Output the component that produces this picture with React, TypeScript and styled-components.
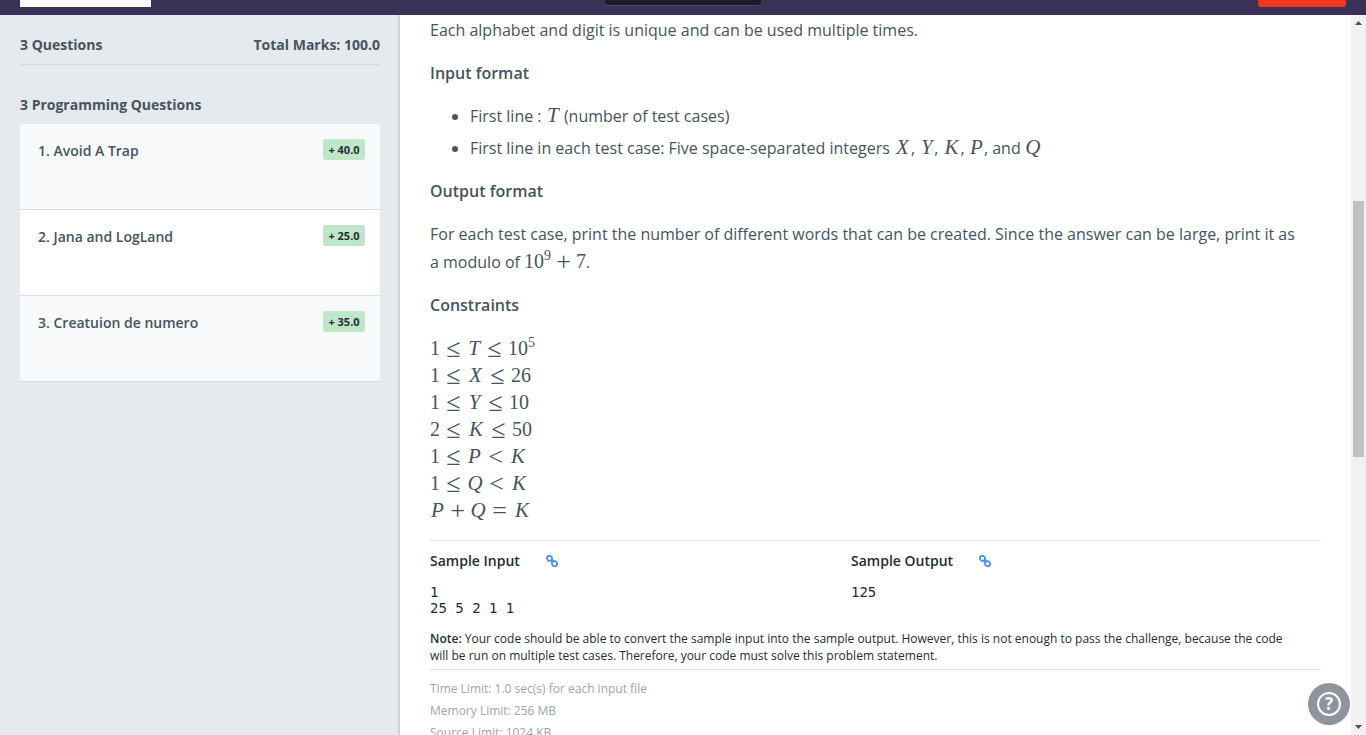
import React from "react";
import styled, { createGlobalStyle } from "styled-components";

const GlobalStyle = createGlobalStyle`
  *, *::before, *::after { box-sizing: border-box; }
  body {
    margin: 0;
    font-family: "Open Sans", "Noto Sans", sans-serif;
    color: #46535e;
    background: #ffffff;
  }
  h2, h3, p, ul, ol, pre { margin: 0; padding: 0; }
`;

const Shell = styled.div`
  display: flex;
  flex-direction: column;
  height: 100vh;
  overflow: hidden;
`;

const TopBar = styled.header`
  display: grid;
  grid-template-columns: 1fr auto 1fr;
  align-items: start;
  flex: none;
  height: 15px;
  padding: 0 20px;
  background: #393256;
`;

const LogoPlate = styled.div`
  width: 131px;
  height: 7px;
  background: #ffffff;
`;

const TimerPlate = styled.div`
  width: 156px;
  height: 5px;
  border-radius: 0 0 3px 3px;
  background: #1d1928;
  box-shadow: 0 1px 0 #4d466a;
`;

const EndButton = styled.button`
  justify-self: end;
  width: 88px;
  height: 7px;
  padding: 0;
  border: 0;
  border-radius: 0 0 3px 3px;
  background: #f0391c;
`;

const Body = styled.div`
  display: flex;
  flex: 1;
  min-height: 0;
`;

const Sidebar = styled.aside`
  flex: none;
  width: 400px;
  padding: 16px 19px 0 20px;
  border-right: 1px solid #c9ced3;
  background: #e5eaee;
  box-shadow: inset -2px 0 2px -1px #d3d8dc;
`;

const Summary = styled.div`
  display: flex;
  justify-content: space-between;
  padding-bottom: 5px;
  border-bottom: 1px solid #d3d9dd;
  font-size: 14px;
  font-weight: 700;
  line-height: 28px;
`;

const SectionTitle = styled.h2`
  && { margin-top: 26px; }
  padding-bottom: 5px;
  font-size: 14px;
  font-weight: 700;
  line-height: 28px;
`;

const QuestionList = styled.ul`
  list-style: none;
`;

const QuestionLink = styled.a<{ $active?: boolean }>`
  display: flex;
  justify-content: space-between;
  align-items: flex-start;
  height: 86px;
  padding: 15px 15px 0 18px;
  border-bottom: 1px solid #d9dde1;
  background: ${(p) => (p.$active ? "#ffffff" : "#f8f9fb")};
  color: inherit;
  font-size: 14px;
  font-weight: 600;
  line-height: 24px;
  text-decoration: none;
`;

const Marks = styled.span`
  min-width: 42px;
  padding: 0 5px;
  border-radius: 3px;
  background: #bfe6c8;
  color: #252c33;
  font-size: 11px;
  font-weight: 700;
  line-height: 21px;
  text-align: center;
`;

const Content = styled.main`
  flex: 1;
  min-width: 0;
  overflow: hidden;
  padding: 2px 30px 0;
`;

const Text = styled.p`
  && { margin-bottom: 16px; padding-right: 24px; }
  font-size: 16px;
  line-height: 27px;
`;

const Heading = styled.h3`
  && { margin-bottom: 16px; }
  font-size: 16px;
  font-weight: 600;
  line-height: 27px;
`;

const Bullets = styled.ul`
  && { margin-bottom: 16px; padding-left: 40px; }
  font-size: 16px;
  line-height: 27px;
  li + li { margin-top: 5px; }
`;

const Formula = styled.span<{ $tall?: boolean }>`
  font-family: "Liberation Serif", serif;
  font-size: 20px;
  line-height: ${(p) => (p.$tall ? 26 : 20)}px;
  white-space: nowrap;
  sup {
    font-size: 14px;
    line-height: 0;
    vertical-align: 8px;
  }
`;

const letterWidths: Record<string, number> = { T: 14, X: 17, Y: 15, K: 18, P: 15, Q: 16 };

const Letter = styled.i<{ $width: number }>`
  display: inline-block;
  width: ${(p) => p.$width}px;
  font-size: 21px;
  line-height: 20px;
  text-align: center;
`;

const Operator = styled.span<{ $binary?: boolean }>`
  display: inline-block;
  width: 15px;
  margin: 0 ${(p) => (p.$binary ? 5 : 6)}px;
  font-size: 26px;
  line-height: 20px;
  text-align: center;
  vertical-align: -2px;
`;

const Constraints = styled.ul`
  list-style: none;
  li { height: 27px; line-height: 29px; }
`;

const Samples = styled.div`
  display: grid;
  grid-template-columns: 421px 1fr;
  margin-top: 16px;
  border-top: 1px solid #dddddd;
  padding-top: 8px;
`;

const SampleTitle = styled.h3`
  display: flex;
  align-items: center;
  gap: 26px;
  && { margin-bottom: 11px; }
  color: #252c33;
  font-size: 14px;
  font-weight: 600;
  line-height: 24px;
`;

const SampleText = styled.pre`
  color: #252c33;
  font-family: "DejaVu Sans Mono", monospace;
  font-size: 14px;
  line-height: 16px;
`;

const LinkAnchor = styled.a`
  display: flex;
  svg { display: block; }
`;

const Note = styled.p`
  && { margin-top: 14px; padding: 0 24px 5px 0; }
  border-bottom: 1px solid #dddddd;
  color: #252c33;
  font-size: 12px;
  line-height: 17px;
  b { font-weight: 600; }
`;

const Limits = styled.ul`
  && { padding-top: 8px; }
  list-style: none;
  color: #a0a4a8;
  font-size: 12px;
  line-height: 22px;
`;

const ScrollTrack = styled.div`
  display: flex;
  flex: none;
  flex-direction: column;
  align-items: center;
  justify-content: space-between;
  width: 15px;
  padding: 6px 0;
  background: #f1f1f1;
`;

const ScrollThumb = styled.div`
  flex: 256;
  width: 11px;
  background: #c1c1c1;
`;

const Space = styled.div<{ $share: number }>`
  flex: ${(p) => p.$share};
`;

const HelpButton = styled.button`
  position: fixed;
  right: 16px;
  bottom: 10px;
  width: 42px;
  height: 42px;
  display: flex;
  align-items: center;
  justify-content: center;
  padding: 0;
  border: 0;
  border-radius: 50%;
  background: #8e959e;
`;

const HelpMark = styled.span`
  width: 24px;
  height: 24px;
  border: 2px solid #ffffff;
  border-radius: 50%;
  color: #ffffff;
  font-family: "Open Sans", sans-serif;
  font-size: 17px;
  font-weight: 700;
  line-height: 20px;
  text-align: center;
`;

const V = ({ n }: { n: string }) => <Letter $width={letterWidths[n]}>{n}</Letter>;
const Le = () => <Operator>≤</Operator>;
const Lt = () => <Operator>&lt;</Operator>;

const ChainIcon = () => (
  <svg width="12" height="12" viewBox="0 0 12 12" fill="none" stroke="#4a90e8" strokeWidth="1.8">
    <ellipse cx="3.5" cy="3.4" rx="2.7" ry="2.4" transform="rotate(45 3.5 3.4)" />
    <ellipse cx="8.5" cy="8.6" rx="2.7" ry="2.4" transform="rotate(45 8.5 8.6)" />
    <path d="M4.6 4.6 L7.4 7.4" />
  </svg>
);

const questions = [
  { title: "1. Avoid A Trap", marks: "+ 40.0" },
  { title: "2. Jana and LogLand", marks: "+ 25.0", active: true },
  { title: "3. Creatuion de numero", marks: "+ 35.0" },
];

export default function App() {
  return (
    <Shell>
      <GlobalStyle />
      <TopBar>
        <LogoPlate />
        <TimerPlate />
        <EndButton aria-label="End test" />
      </TopBar>
      <Body>
        <Sidebar>
          <Summary>
            <span>3 Questions</span>
            <span>Total Marks: 100.0</span>
          </Summary>
          <SectionTitle>3 Programming Questions</SectionTitle>
          <QuestionList>
            {questions.map((q) => (
              <li key={q.title}>
                <QuestionLink href="#" $active={q.active}>
                  {q.title}
                  <Marks>{q.marks}</Marks>
                </QuestionLink>
              </li>
            ))}
          </QuestionList>
        </Sidebar>
        <Content>
          <Text>Each alphabet and digit is unique and can be used multiple times.</Text>
          <Heading>Input format</Heading>
          <Bullets>
            <li>First line : <Formula><V n="T" /></Formula> (number of test cases)</li>
            <li>
              First line in each test case: Five space-separated integers{" "}
              <Formula><V n="X" /></Formula>, <Formula><V n="Y" /></Formula>, <Formula><V n="K" /></Formula>,{" "}
              <Formula><V n="P" /></Formula>, and <Formula><V n="Q" /></Formula>
            </li>
          </Bullets>
          <Heading>Output format</Heading>
          <Text>
            For each test case, print the number of different words that can be created. Since the answer can be large, print it as
            a modulo of <Formula $tall>10<sup>9</sup><Operator $binary>+</Operator>7</Formula>.
          </Text>
          <Heading>Constraints</Heading>
          <Constraints>
            <li><Formula>1<Le /><V n="T" /><Le />10<sup>5</sup></Formula></li>
            <li><Formula>1<Le /><V n="X" /><Le />26</Formula></li>
            <li><Formula>1<Le /><V n="Y" /><Le />10</Formula></li>
            <li><Formula>2<Le /><V n="K" /><Le />50</Formula></li>
            <li><Formula>1<Le /><V n="P" /><Lt /><V n="K" /></Formula></li>
            <li><Formula>1<Le /><V n="Q" /><Lt /><V n="K" /></Formula></li>
            <li><Formula><V n="P" /><Operator $binary>+</Operator><V n="Q" /><Operator>=</Operator><V n="K" /></Formula></li>
          </Constraints>
          <Samples>
            <section>
              <SampleTitle>Sample Input <LinkAnchor href="#" aria-label="Sample input file"><ChainIcon /></LinkAnchor></SampleTitle>
              <SampleText>{"1\n25 5 2 1 1"}</SampleText>
            </section>
            <section>
              <SampleTitle>Sample Output <LinkAnchor href="#" aria-label="Sample output file"><ChainIcon /></LinkAnchor></SampleTitle>
              <SampleText>125</SampleText>
            </section>
          </Samples>
          <Note>
            <b>Note:</b> Your code should be able to convert the sample input into the sample output. However, this is not enough to pass the challenge, because the code will be run on multiple test cases. Therefore, your code must solve this problem statement.
          </Note>
          <Limits>
            <li>Time Limit: 1.0 sec(s) for each input file</li>
            <li>Memory Limit: 256 MB</li>
            <li>Source Limit: 1024 KB</li>
          </Limits>
        </Content>
        <ScrollTrack aria-hidden="true">
          <svg width="7" height="4" viewBox="0 0 7 4"><path d="M0 4 L3.5 0 L7 4Z" fill="#505050" /></svg>
          <Space $share={176} />
          <ScrollThumb />
          <Space $share={268} />
          <svg width="7" height="4" viewBox="0 0 7 4"><path d="M0 0 L3.5 4 L7 0Z" fill="#505050" /></svg>
        </ScrollTrack>
      </Body>
      <HelpButton aria-label="Help"><HelpMark>?</HelpMark></HelpButton>
    </Shell>
  );
}
